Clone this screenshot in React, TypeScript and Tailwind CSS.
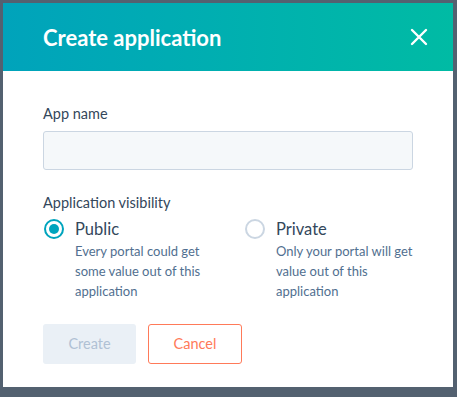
import { useState } from "react"

const Radio = ({ checked }: { checked: boolean }) => (
  <span
    className={`mt-[2px] flex h-[20px] w-[20px] shrink-0 items-center justify-center rounded-full border-2 ${
      checked ? "border-[#00a4bd]" : "border-[#cbd6e2]"
    }`}
  >
    {checked && <span className="h-[10px] w-[10px] rounded-full bg-[#00a4bd]" />}
  </span>
)

const options = [
  { id: "public", title: "Public", text: "Every portal could get some value out of this application" },
  { id: "private", title: "Private", text: "Only your portal will get value out of this application" },
]

export default function App() {
  const [visibility, setVisibility] = useState("public")

  return (
    <div className="h-[397px] w-[457px] bg-[#536170] pl-[3px] pt-[3px]" style={{ fontFamily: "Lato, 'Noto Sans', sans-serif" }}>
      <div className="h-[384px] w-[450px] bg-white">
        {/* header */}
        <div className="flex h-[68px] items-center justify-between bg-gradient-to-r from-[#00a3bb] to-[#00bba4] pl-[40px] pr-[24px]">
          <h1 className="text-[22px] font-bold text-white">Create application</h1>
          <svg width="18" height="18" viewBox="0 0 18 18" className="mr-[1px]">
            <path d="M2 2L16 16M16 2L2 16" stroke="white" strokeWidth="2.4" strokeLinecap="round" />
          </svg>
        </div>

        <div className="px-[40px] pt-[33px]">
          <label className="block text-[14.5px] leading-[20px] text-[#33475b]">App name</label>
          <input className="mt-[7px] block h-[39px] w-[370px] rounded-[3px] border border-[#cbd6e2] bg-[#f5f8fa] px-3 outline-none" />

          <p className="mt-[23px] text-[14.5px] leading-[20px] text-[#33475b]">Application visibility</p>
          <div className="mt-[4px] flex">
            {options.map((o) => (
              <div key={o.id} className="flex w-[201px] shrink-0 cursor-pointer gap-[11px] pl-[1px]" onClick={() => setVisibility(o.id)}>
                <Radio checked={visibility === o.id} />
                <div className="w-[140px]">
                  <p className="text-[16.5px] leading-[24px] text-[#33475b]">{o.title}</p>
                  <p className="text-[13px] leading-[20px] text-[#516f90]">{o.text}</p>
                </div>
              </div>
            ))}
          </div>

          <div className="mt-[23px] flex gap-[12px]">
            <button className="h-[40px] w-[93px] rounded-[3px] bg-[#eaf0f6] text-[14.5px] text-[#b0c1d4]">Create</button>
            <button className="h-[40px] w-[94px] rounded-[3px] border border-[#ff7a59] text-[14.5px] text-[#ff7a59]">Cancel</button>
          </div>
        </div>
      </div>
    </div>
  )
}
